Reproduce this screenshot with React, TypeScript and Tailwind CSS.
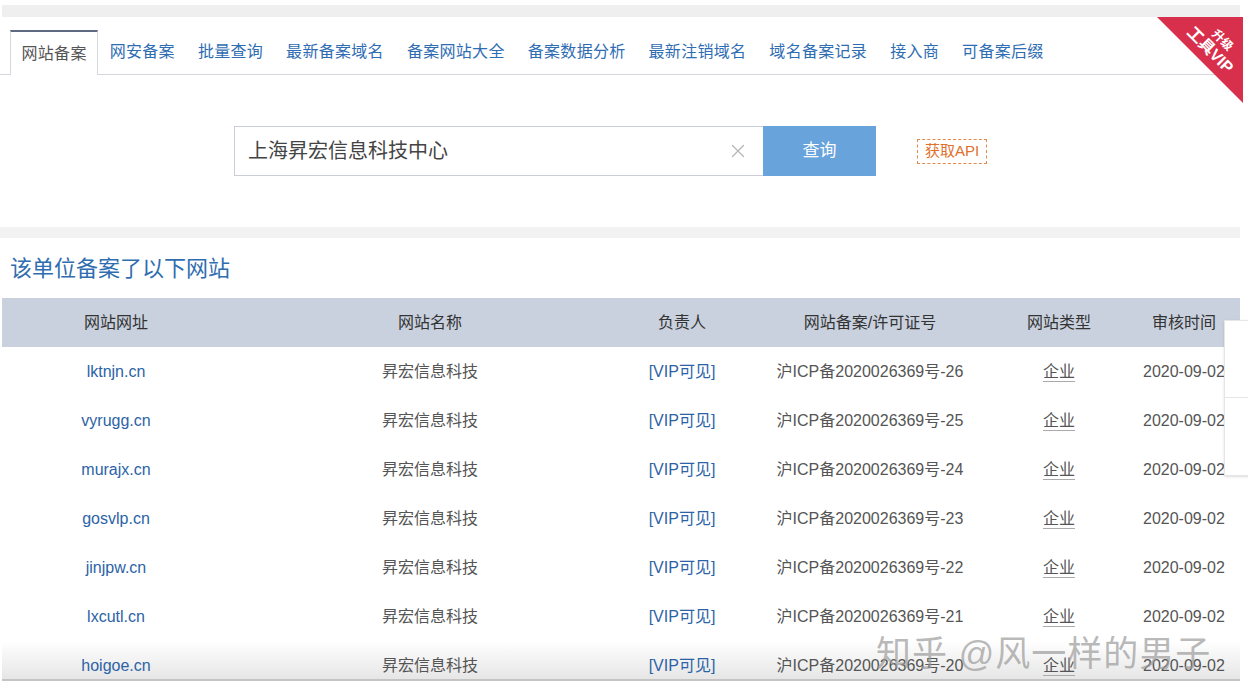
import { X } from 'lucide-react'

const font = { fontFamily: '"Liberation Sans", "Noto Sans CJK SC", sans-serif' }

const tabs = ['网站备案', '网安备案', '批量查询', '最新备案域名', '备案网站大全', '备案数据分析', '最新注销域名', '域名备案记录', '接入商', '可备案后缀']

const rows = [
  { domain: 'lktnjn.cn', no: '26' },
  { domain: 'vyrugg.cn', no: '25' },
  { domain: 'murajx.cn', no: '24' },
  { domain: 'gosvlp.cn', no: '23' },
  { domain: 'jinjpw.cn', no: '22' },
  { domain: 'lxcutl.cn', no: '21' },
  { domain: 'hoigoe.cn', no: '20' },
]

const cols = 'grid grid-cols-[228px_400px_104px_272px_106px_146px]'

function VipRibbon() {
  return (
    <svg className="absolute right-[-3px] top-0" width="86" height="86" viewBox="0 0 86 86">
      <polygon points="0,0 86,0 86,86" fill="#d8304c" />
      <g transform="rotate(45 43 43)" fill="#fff" fontWeight="bold" fontFamily='"Liberation Sans", "Noto Sans CJK SC", sans-serif'>
        <text x="45" y="17" fontSize="12" textAnchor="middle">升级</text>
        <text x="43" y="34" fontSize="16" textAnchor="middle">工具VIP</text>
      </g>
    </svg>
  )
}

export default function App() {
  return (
    <div className="w-[1248px] h-[696px] bg-white overflow-hidden relative" style={font}>
      <div className="pt-[5px] w-[1240px]">
        <div className="h-[12px] ml-[2px] bg-[#efefef]" />
        <div className="relative">
          <VipRibbon />
          <div className="pt-[13px] flex border-b border-[#d5d8dd] pl-[10px]">
            {tabs.map((t, i) =>
              i === 0 ? (
                <div key={t} className="h-[45px] -mb-px px-[10.5px] flex items-center text-[16px] tracking-[0.3px] text-[#555] bg-white border-t-2 border-t-[#5d6a82] border-x border-x-[#d5d8dd]">
                  {t}
                </div>
              ) : (
                <div key={t} className="h-[44px] px-[11.5px] flex items-center text-[16px] tracking-[0.3px] text-[#2f6db3]">
                  {t}
                </div>
              )
            )}
          </div>
        </div>

        <div className="flex items-center pt-[51px] pl-[234px]">
          <div className="w-[529px] h-[50px] border border-[#c9ced8] border-r-0 flex items-center pl-[13px] pr-[14px]">
            <span className="flex-1 text-[20px] text-[#444]">上海昇宏信息科技中心</span>
            <X className="w-[22px] h-[22px] text-[#b5b5b5]" strokeWidth={1.3} />
          </div>
          <div className="w-[113px] h-[50px] bg-[#68a3dc] text-white text-[17px] flex items-center justify-center">查询</div>
          <div className="ml-[41px] h-[25px] px-[7px] border border-dashed border-[#e5894a] text-[#e0702a] text-[15px] flex items-center">获取API</div>
        </div>

        <div className="h-[11px] mt-[51px] bg-[#f2f2f2]" />

        <div className="h-[60px] flex items-center pl-[10px] text-[22px] text-[#2f6db0]">该单位备案了以下网站</div>

        <div className="ml-[2px] overflow-hidden">
          <div className={`${cols} h-[49px] bg-[#c9d1de] text-[16px] text-[#333] items-center text-center`}>
            <div>网站网址</div>
            <div>网站名称</div>
            <div>负责人</div>
            <div>网站备案/许可证号</div>
            <div>网站类型</div>
            <div className="text-left pl-[40px]">审核时间</div>
          </div>
          {rows.map((r, i) => {
            const last = i === rows.length - 1
            return (
              <div
                key={r.domain}
                className={`${cols} text-center text-[16px] leading-[24px] text-[#555] ${last ? 'h-[40px] items-start pt-[13px] bg-gradient-to-b from-white to-[#e6e6e6] border-b-2 border-[#c4c4c4]' : 'h-[49px] items-center'}`}
              >
                <div className="text-[#2c63a6]">{r.domain}</div>
                <div>昇宏信息科技</div>
                <div className="text-[#2c63a6]">[VIP可见]</div>
                <div>沪ICP备2020026369号-{r.no}</div>
                <div className="underline underline-offset-4 decoration-1 decoration-[#aaa]">企业</div>
                <div className="text-left pl-[31px]">2020-09-02</div>
              </div>
            )
          })}
        </div>
      </div>

      <div className="absolute left-[1224px] top-[320px] w-[30px] h-[156px] bg-white border border-[#e6e6e6] shadow-sm flex flex-col">
        <div className="h-[77px] border-b border-[#e6e6e6]" />
      </div>

      <div className="absolute left-[876px] top-[628px] text-[35px] text-[#9a9a9a]/70 tracking-[1px] whitespace-nowrap">
        知乎 @风一样的男子
      </div>
    </div>
  )
}
